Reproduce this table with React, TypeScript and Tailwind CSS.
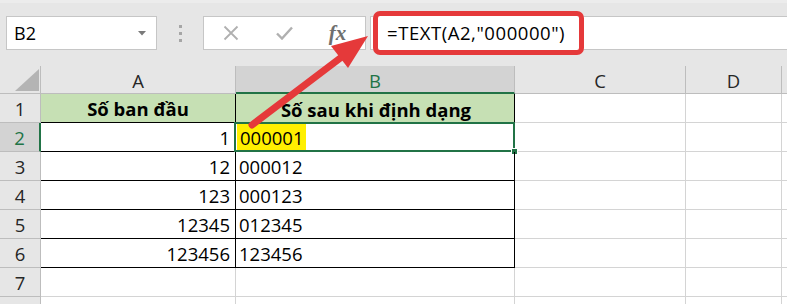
import React from "react";

type Row = { n: number; a: string; b: string };

const rows: Row[] = [
  { n: 1, a: "Số ban đầu", b: "Số sau khi định dạng" },
  { n: 2, a: "1", b: "000001" },
  { n: 3, a: "12", b: "000012" },
  { n: 4, a: "123", b: "000123" },
  { n: 5, a: "12345", b: "012345" },
  { n: 6, a: "123456", b: "123456" },
  { n: 7, a: "", b: "" },
  { n: 8, a: "", b: "" },
];

const font = { fontFamily: '"Open Sans", "Noto Sans", sans-serif' };

function TopBar() {
  return (
    <div className="relative h-[66px] bg-[#e6e6e6] border-t-[3px] border-[#ececec]">
      <div className="flex items-stretch pt-[13px] h-[47px]">
        {/* name box */}
        <div className="ml-[6px] w-[151px] bg-white border border-[#c6c6c6] flex items-center justify-between pl-[7px] pr-[10px]">
          <span className="text-[18px] text-black leading-none">B2</span>
          <svg width="8" height="5" viewBox="0 0 8 5">
            <polygon points="0,0 8,0 4,4.5" fill="#7a7a7a" />
          </svg>
        </div>
        {/* splitter dots */}
        <div className="w-[46px] flex flex-col items-center justify-center gap-[4px]">
          <span className="block w-[3px] h-[3px] bg-[#a6a6a6]" />
          <span className="block w-[3px] h-[3px] bg-[#a6a6a6]" />
          <span className="block w-[3px] h-[3px] bg-[#a6a6a6]" />
        </div>
        {/* buttons */}
        <div className="w-[163px] bg-white border border-[#c6c6c6] flex items-center">
          <div className="w-[54px] flex justify-center">
            <svg width="16" height="16" viewBox="0 0 16 16">
              <path d="M1.5 1.5 L14.5 14.5 M14.5 1.5 L1.5 14.5" stroke="#b0b0b0" strokeWidth="1.8" />
            </svg>
          </div>
          <div className="w-[52px] flex justify-center">
            <svg width="17" height="14" viewBox="0 0 17 14">
              <path d="M1 7.5 L6 12.5 L16 1.5" stroke="#b0b0b0" strokeWidth="2.4" fill="none" />
            </svg>
          </div>
          <div className="flex-1 flex justify-center">
            <span
              className="text-[21px] italic font-bold text-[#6f6f6f] leading-none"
              style={{ fontFamily: '"Liberation Serif", "DejaVu Serif", serif' }}
            >
              fx
            </span>
          </div>
        </div>
        {/* formula input */}
        <div className="ml-[4px] flex-1 bg-white border border-[#c6c6c6] border-r-0" />
      </div>
      {/* highlighted formula */}
      <div className="absolute left-[373px] top-[8px] w-[211px] h-[44px] rounded-[7px] border-[5px] border-[#e5393a] bg-white flex items-center pl-[9px]">
        <span className="text-[18.5px] text-black leading-none tracking-[0.03em]">=TEXT(A2,"000000")</span>
      </div>
    </div>
  );
}

function Grid() {
  return (
    <div className="relative grid grid-cols-[41px_195px_279px_171px_96px_1fr] grid-rows-[28px] auto-rows-[29px] text-[18.5px] text-black">
      {/* header row */}
      <div className="bg-[#e6e6e6] border-r border-b border-[#bdbdbd] flex items-end justify-end pr-[1px] pb-[2px]">
        <svg width="24" height="22" viewBox="0 0 24 22">
          <polygon points="24,0 24,22 0,22" fill="#b4b4b4" />
        </svg>
      </div>
      <div className="bg-[#e6e6e6] border-r border-b border-[#bdbdbd] flex items-center justify-center pt-[3px] text-[#262626]">A</div>
      <div className="bg-[#d3d3d3] border-r border-[#bdbdbd] border-b-2 border-b-[#217346] flex items-center justify-center pt-[3px] text-[#217346]">B</div>
      <div className="bg-[#e6e6e6] border-r border-b border-[#bdbdbd] flex items-center justify-center pt-[3px] text-[#262626]">C</div>
      <div className="bg-[#e6e6e6] border-r border-b border-[#bdbdbd] flex items-center justify-center pt-[3px] text-[#262626]">D</div>
      <div className="bg-[#e6e6e6] border-b border-[#bdbdbd]" />

      {rows.map((r) => {
        const inTable = r.n <= 6;
        const sel = r.n === 2;
        const head = r.n === 1;
        return (
          <React.Fragment key={r.n}>
            <div
              className={
                sel
                  ? "bg-[#d3d3d3] border-b border-[#bdbdbd] border-r-2 border-r-[#217346] flex items-center justify-center pt-[2px] text-[#217346]"
                  : "bg-[#e6e6e6] border-r border-b border-[#bdbdbd] flex items-center justify-center pt-[2px] text-[#262626]"
              }
            >
              {r.n < 8 ? r.n : ""}
            </div>
            <div
              className={
                (inTable ? "border-r border-b border-black " : "border-r border-b border-[#d4d4d4] ") +
                (head
                  ? "bg-[#c6e0b4] font-bold flex items-center justify-center pt-[2px]"
                  : "flex items-center justify-end pr-[5px] pt-[2px]")
              }
            >
              {r.a}
            </div>
            <div
              className={
                (inTable ? "border-r border-b border-black " : "border-r border-b border-[#d4d4d4] ") +
                (head
                  ? "bg-[#c6e0b4] font-bold flex items-center justify-center pt-[2px]"
                  : "relative flex items-stretch pl-[1px]")
              }
            >
              {sel ? (
                <>
                  <span className="bg-[#ffef00] px-[3px] pt-[2px] flex items-center">{r.b}</span>
                  <div className="absolute -left-[2px] -top-[1px] -right-[1px] -bottom-[1px] border-2 border-[#217346]" />
                  <div className="absolute -right-[4px] -bottom-[4px] w-[7px] h-[7px] bg-[#217346] border border-white" />
                </>
              ) : (
                <span className="flex items-center pl-[2px] pt-[2px]">{r.b}</span>
              )}
            </div>
            <div className="border-r border-b border-[#d4d4d4]" />
            <div className="border-r border-b border-[#d4d4d4]" />
            <div className="border-b border-[#d4d4d4]" />
          </React.Fragment>
        );
      })}
    </div>
  );
}

export default function App() {
  return (
    <div className="relative w-[787px] h-[304px] overflow-hidden bg-white" style={font}>
      <TopBar />
      <Grid />
      {/* arrow */}
      <svg className="absolute left-0 top-0 pointer-events-none" width="787" height="304" viewBox="0 0 787 304">
        <line x1="252" y1="125" x2="343" y2="56" stroke="#e5393a" strokeWidth="7" strokeLinecap="round" />
        <polygon points="368,36 348,68 331,46" fill="#e5393a" />
      </svg>
    </div>
  );
}
